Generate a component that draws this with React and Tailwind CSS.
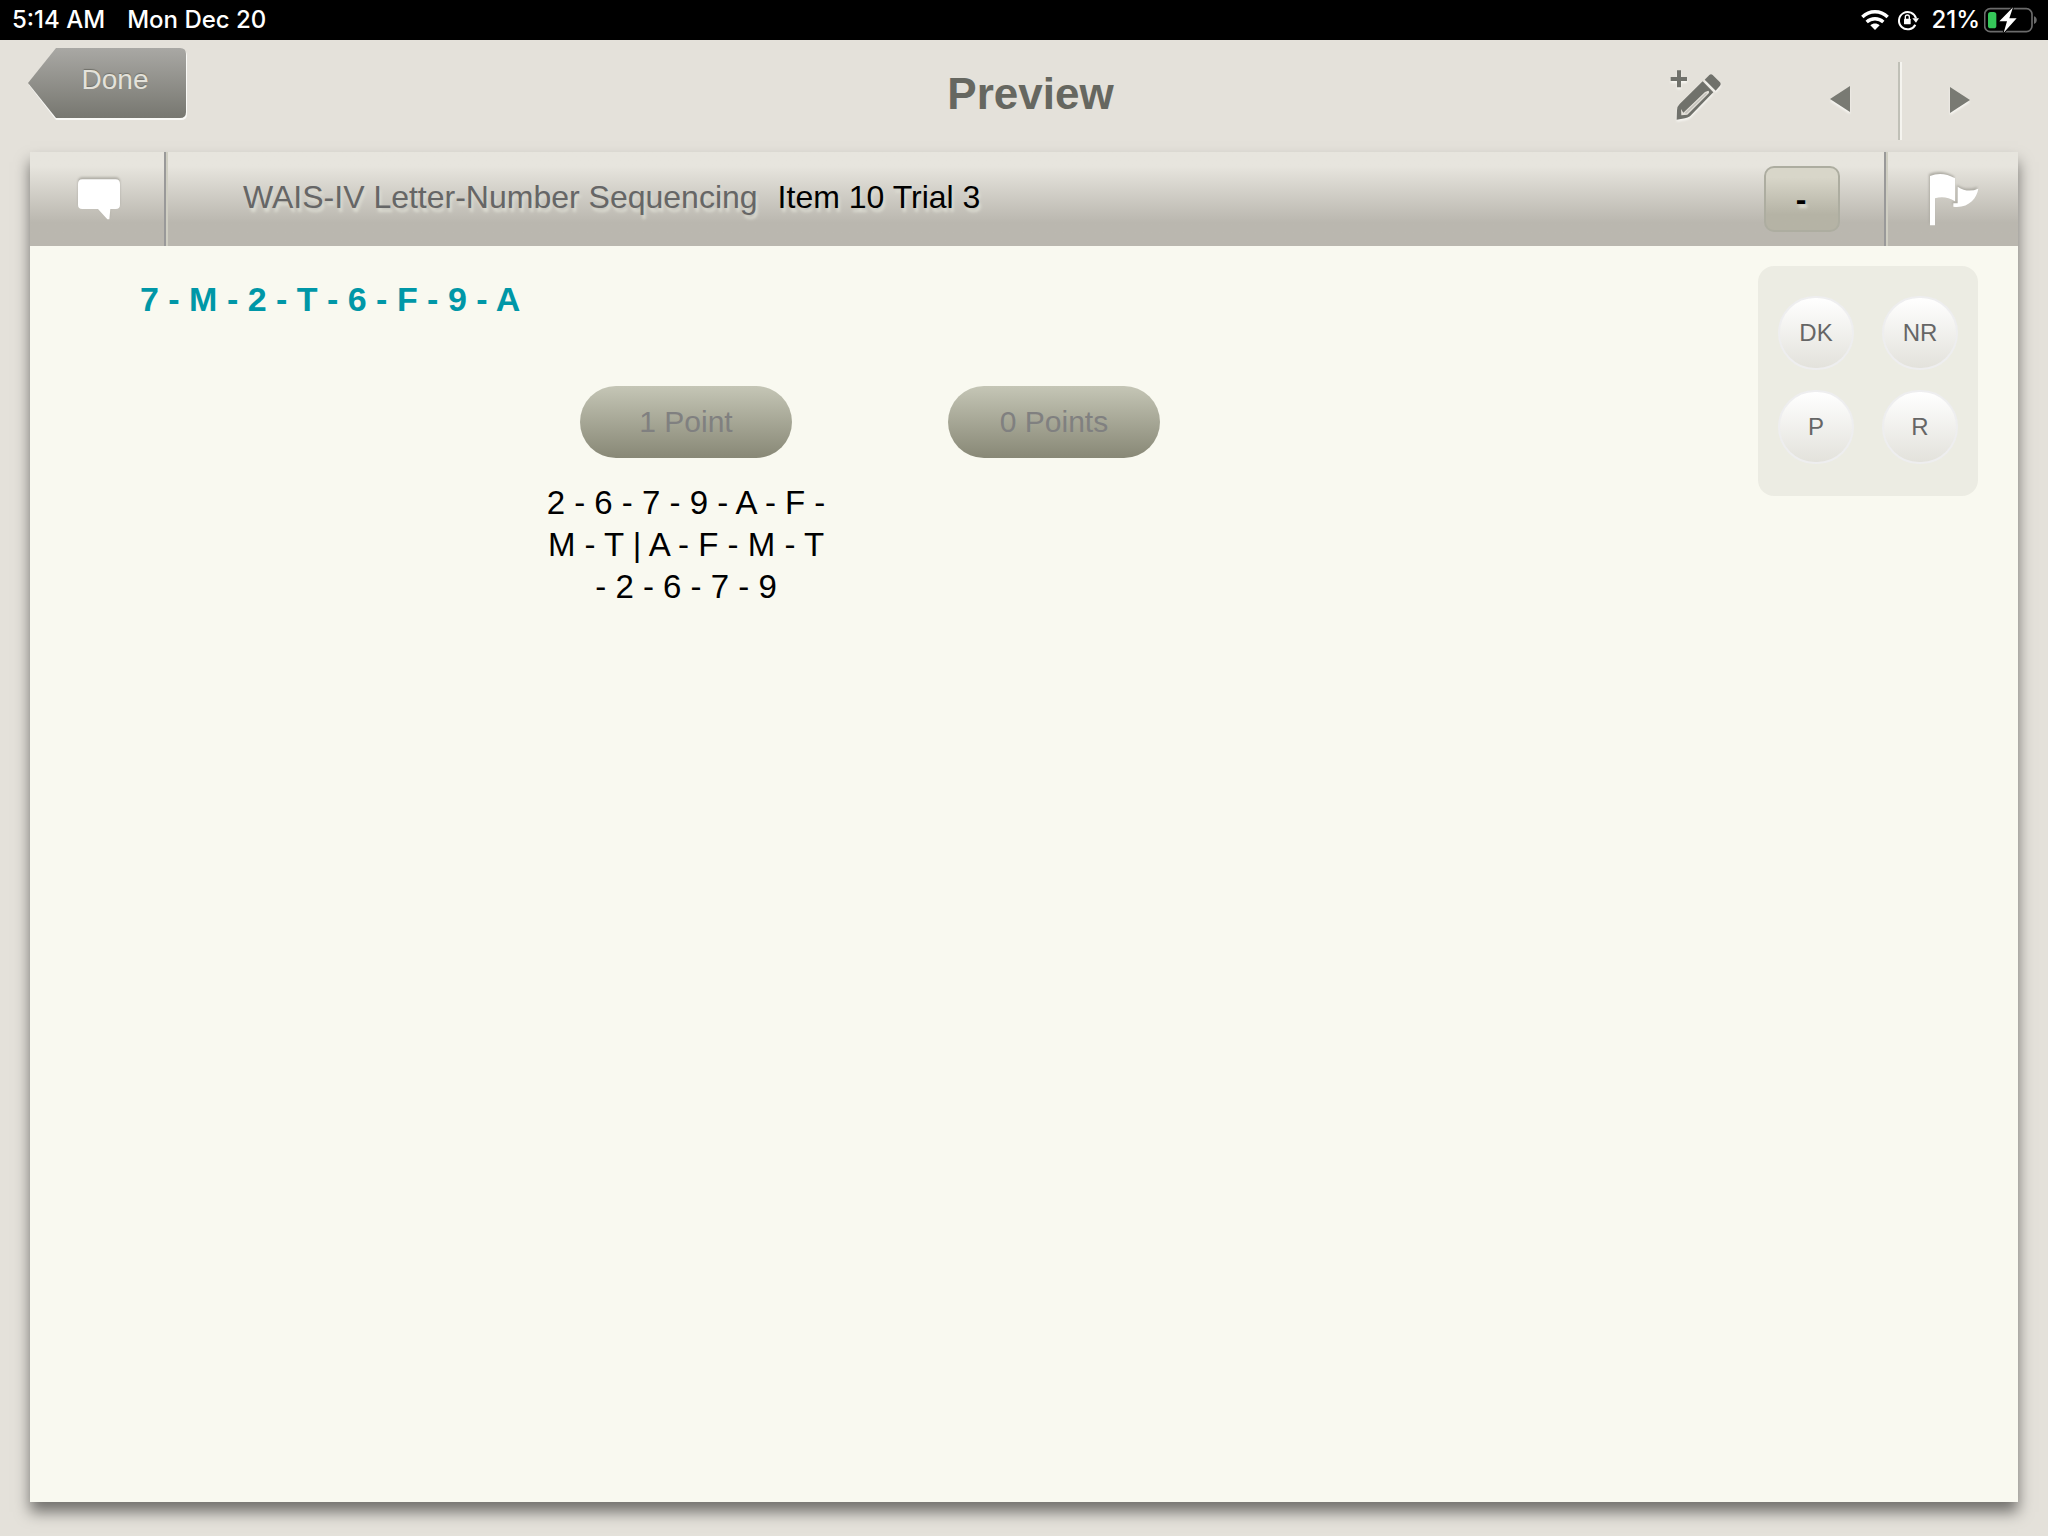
import React from "react";

function WifiIcon() {
  return (
    <svg width="28" height="22" viewBox="0 0 84 66" fill="none" stroke="#fff" aria-hidden="true">
      <path d="M4 24C25 3 59 3 80 24" strokeWidth="10" />
      <path d="M17 39C31 26 53 26 67 39" strokeWidth="10" />
      <path d="M42 63L28 49C36 42 48 42 56 49Z" fill="#fff" stroke="none" />
    </svg>
  );
}

function RotationLockIcon() {
  return (
    <svg width="22" height="22" viewBox="0 0 66 66" fill="none" stroke="#fff" aria-hidden="true">
      <path d="M55 47A26 26 0 1 1 57 28" strokeWidth="6" />
      <path d="M46 28H66L57 41Z" fill="#fff" stroke="none" />
      <rect x="21" y="29" width="20" height="17" rx="2" fill="#fff" stroke="none" />
      <path d="M25 30V24a6 6 0 0 1 12 0v6" strokeWidth="4" />
    </svg>
  );
}

function BatteryIcon() {
  return (
    <svg width="54" height="26" viewBox="0 0 162 78" aria-hidden="true">
      <rect x="2" y="5" width="142" height="69" rx="17" fill="none" stroke="#6b6b6b" strokeWidth="5" />
      <path d="M150 28c11 3 11 20 0 23Z" fill="#6b6b6b" />
      <rect x="12" y="15" width="25" height="49" rx="8" fill="#35c759" />
      <path d="M87 1L46 43H69L59 77L98 34H76Z" fill="#fff" stroke="#000" strokeWidth="6" paintOrder="stroke" />
    </svg>
  );
}

function PencilPlusIcon() {
  return (
    <svg width="52" height="52" viewBox="0 0 156 156" fill="#70716b" className="drop-shadow-[0_2px_1px_#f8f7f3]" aria-hidden="true">
      <path d="M21 1h12v20h18v12H33v19H21V33H2V21h19Z" />
      <path d="M104 29L118 15Q123 11 128 15L150 37Q154 42 150 47L137 62Z" />
      <path d="M98 34L130 67L60 139Q53 144 45 145L20 149L21 121Q21 109 29 102Z" />
      <path d="M33 117L40 128L105 66L115 62Q120 66 114 72L52 134L34 136Z" fill="#e4e1da" />
      <path d="M44 129L108 68L111 71L49 131Z" fill="#70716b" opacity=".25" />
    </svg>
  );
}

function FlagIcon() {
  return (
    <svg width="55" height="56" viewBox="0 0 165 168" fill="#fff" className="drop-shadow-[-1px_-2px_1px_#aeaca4]" aria-hidden="true">
      <path d="M12 15Q49 0 87 22V91Q57 72 27 82V163H12Z" />
      <path d="M95 47Q125 67 157 53C153 82 126 113 82 107V97H95Z" />
    </svg>
  );
}

function CommentIcon() {
  return (
    <svg width="44" height="42" viewBox="0 0 132 126" fill="#fff" className="drop-shadow-[0_-2px_1px_#aeaca4]" aria-hidden="true">
      <path d="M16 4H116Q129 4 129 18V80Q129 93 116 93H100L97 124H91L63 93H16Q3 93 3 80V18Q3 4 16 4Z" />
    </svg>
  );
}

function Arrow({ points }) {
  return (
    <svg width="20" height="26" viewBox="0 0 20 26" className="drop-shadow-[0_2px_1px_#f8f7f3]" aria-hidden="true">
      <polygon points={points} fill="#797a73" />
    </svg>
  );
}

function StatusBar() {
  return (
    <div className="flex h-10 items-center bg-black pl-3 pr-[10px] font-[Inter,sans-serif] text-2xl font-medium text-white">
      <span>5:14 AM</span>
      <span className="ml-[22px]">Mon Dec 20</span>
      <div className="ml-auto flex items-center">
        <WifiIcon />
        <span className="ml-2 flex"><RotationLockIcon /></span>
        <span className="ml-3">21%</span>
        <span className="ml-1 flex"><BatteryIcon /></span>
      </div>
    </div>
  );
}

function Header() {
  return (
    <header className="grid h-28 grid-cols-[1fr_auto_1fr] pl-[43px] pr-[30px]">
      <button type="button" className="relative -ml-4 mt-2 flex h-[72px] w-40 items-center justify-center pb-2 pl-4 text-[28px] text-[#e4e2da] [text-shadow:0_-1px_1px_#6f6f69]">
        <svg viewBox="0 0 160 72" className="absolute inset-0 size-full" aria-hidden="true">
          <defs>
            <linearGradient id="done" x1="0" y1="0" x2="0" y2="1">
              <stop offset="0" stopColor="#a9a8a4" />
              <stop offset="1" stopColor="#777770" />
            </linearGradient>
          </defs>
          <path d="M2 37L29 2H154Q160 2 160 8V66Q160 72 154 72H29Z" fill="#fafaf7" />
          <path d="M1 35L29 0H153Q159 0 159 6V64Q159 70 153 70H29Z" fill="url(#done)" />
        </svg>
        <span className="relative">Done</span>
      </button>
      <h1 className="self-center pb-1 text-[44px] font-bold leading-none text-[#666760]">Preview</h1>
      <div className="flex items-center justify-end pt-2">
        <button type="button" aria-label="Add note" className="mr-12 flex h-20 w-[76px] items-center justify-center pb-2">
          <PencilPlusIcon />
        </button>
        <button type="button" aria-label="Previous item" className="flex h-20 w-[116px] items-center justify-center pb-0.5">
          <Arrow points="0,13 20,0 20,26" />
        </button>
        <div className="mt-0.5 h-[78px] w-1 border-l-2 border-r-2 border-l-[#c0c0b7] border-r-[#f5f4ef]" />
        <button type="button" aria-label="Next item" className="flex h-20 w-[116px] items-center justify-center">
          <Arrow points="20,13 0,0 0,26" />
        </button>
      </div>
    </header>
  );
}

function Divider() {
  return <div className="w-1 border-l-2 border-r-2 border-l-[#999999] border-r-[#cfcec2]" />;
}

function ItemBar() {
  return (
    <div className="flex h-[94px] bg-linear-to-b from-[#e7e5de] from-15% to-[#bab7af] to-75%">
      <button type="button" aria-label="Comments" className="flex w-[134px] items-center justify-center pl-1">
        <CommentIcon />
      </button>
      <Divider />
      <h2 className="flex flex-1 items-center gap-5 pb-1 pl-[75px] text-[32px] text-black [text-shadow:2px_4px_3px_#dcdcd2]">
        <span className="text-[#666666]">WAIS-IV Letter-Number Sequencing</span>
        <span>Item 10 Trial 3</span>
      </h2>
      <button type="button" aria-label="Score" className="mr-11 h-[66px] w-[76px] self-center rounded-[10px] border-2 border-[#adada0] bg-linear-to-b from-[#d8d6c9] from-15% to-[#b5b3a5] to-75% pr-0.5 text-[32px] font-bold text-black [text-shadow:2px_4px_3px_#dcdcd2]">
        -
      </button>
      <Divider />
      <button type="button" aria-label="Flag item" className="flex w-[130px] items-center justify-center">
        <FlagIcon />
      </button>
    </div>
  );
}

function Choice({ label, children }) {
  return (
    <div className="flex w-[290px] flex-col items-center">
      <button type="button" className="h-[72px] w-[212px] rounded-full bg-linear-to-b from-[#c5c6b6] to-[#888876] pb-0.5 text-[30px] text-[#808080]">
        {label}
      </button>
      <p className="mt-6 text-center text-[33px] leading-[42px] text-black">{children}</p>
    </div>
  );
}

const codes = ["DK", "NR", "P", "R"];

export default function App() {
  return (
    <div className="flex min-h-screen flex-col bg-[#e4e1da] font-['Liberation_Sans',Arial,sans-serif]">
      <StatusBar />
      <Header />
      <main className="mx-[30px] mb-[34px] flex flex-1 flex-col bg-[#f9f9f0] shadow-[0_10px_14px_rgba(0,0,0,0.5)]">
        <ItemBar />
        <div className="flex justify-between pl-[110px] pr-10">
          <section>
            <p className="mt-8 text-[34px] font-bold leading-[42px] text-[#0097a7]">7 - M - 2 - T - 6 - F - 9 - A</p>
            <div className="ml-[401px] mt-[66px] flex gap-[78px]">
              <Choice label="1 Point">2 - 6 - 7 - 9 - A - F - M - T | A - F - M - T - 2 - 6 - 7 - 9</Choice>
              <Choice label="0 Points" />
            </div>
          </section>
          <aside className="mt-5 grid h-[230px] w-[220px] grid-cols-[auto_auto] content-center justify-between gap-y-5 rounded-2xl bg-[#ecece3] px-5 pb-0.5">
            {codes.map((code) => (
              <button key={code} type="button" className="h-[74px] w-[76px] rounded-full border-2 border-[#eeeeef] bg-linear-to-b from-white to-[#e3e2dc] text-2xl text-[#666666]">
                {code}
              </button>
            ))}
          </aside>
        </div>
      </main>
    </div>
  );
}
